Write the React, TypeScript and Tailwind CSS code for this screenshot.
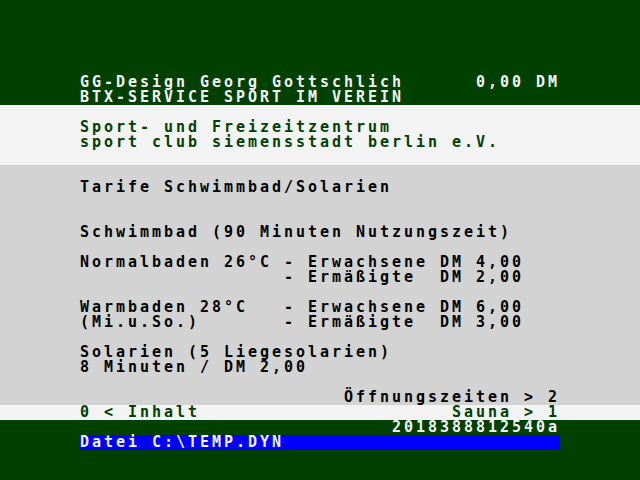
const Row = ({ text = '', className = '' }: { text?: string; className?: string }) => (
  <div className={`h-[15px] whitespace-pre ${className}`}>{text}</div>
);

const Split = ({ left, right }: { left: string; right: string }) => (
  <div className="h-[15px] flex justify-between whitespace-pre">
    <span>{left}</span>
    <span>{right}</span>
  </div>
);

export default function App() {
  return (
    <div
      className="w-[640px] h-[480px] overflow-hidden bg-[#004000] text-[15px] leading-[15px] font-bold tracking-[2.97px]"
      style={{ fontFamily: '"DejaVu Sans Mono", "Liberation Mono", monospace' }}
    >
      {/* header */}
      <div className="pt-[75px] text-[#f4f4f4]">
        <div className="w-[480px] mx-auto">
          <Split left="GG-Design Georg Gottschlich" right="0,00 DM" />
          <Row text="BTX-SERVICE SPORT IM VEREIN" />
        </div>
      </div>

      {/* provider band */}
      <div className="bg-[#f3f3f3] text-[#004000]">
        <div className="w-[480px] mx-auto">
          <Row />
          <Row text="Sport- und Freizeitzentrum" />
          <Row text="sport club siemensstadt berlin e.V." />
          <Row />
        </div>
      </div>

      {/* content */}
      <div className="bg-[#d3d3d3] text-black">
        <div className="w-[480px] mx-auto">
          <Row />
          <Row text="Tarife Schwimmbad/Solarien" />
          <Row />
          <Row />
          <Row text="Schwimmbad (90 Minuten Nutzungszeit)" />
          <Row />
          <Row text="Normalbaden 26°C - Erwachsene DM 4,00" />
          <Row text="                 - Ermäßigte  DM 2,00" />
          <Row />
          <Row text="Warmbaden 28°C   - Erwachsene DM 6,00" />
          <Row text="(Mi.u.So.)       - Ermäßigte  DM 3,00" />
          <Row />
          <Row text="Solarien (5 Liegesolarien)" />
          <Row text="8 Minuten / DM 2,00" />
          <Row />
          <Split left="" right="Öffnungszeiten > 2" />
        </div>
      </div>

      {/* nav band */}
      <div className="bg-[#f3f3f3] text-[#004000]">
        <div className="w-[480px] mx-auto">
          <Split left="0 < Inhalt" right="Sauna > 1" />
        </div>
      </div>

      {/* status */}
      <div className="text-[#f4f4f4]">
        <div className="w-[480px] mx-auto">
          <Split left="" right="2018388812540a" />
          <Row text="Datei C:\TEMP.DYN" className="bg-[#0000ff]" />
        </div>
      </div>
    </div>
  );
}
